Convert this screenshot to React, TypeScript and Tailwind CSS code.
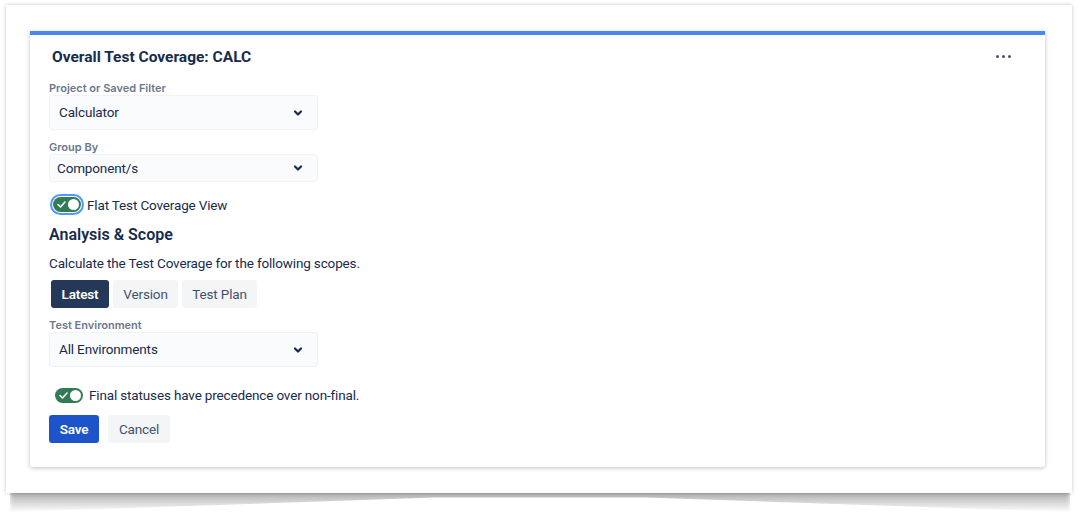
import React from "react";

const font = { fontFamily: "Roboto, 'Noto Sans', 'Liberation Sans', sans-serif" };
const labelFont = { fontFamily: "Inter, 'Noto Sans', 'Liberation Sans', sans-serif" };

function Chevron() {
	return (
		<svg width="10" height="8" viewBox="0 0 10 8" className="shrink-0">
			<polyline
				points="2,2.5 5,5.5 8,2.5"
				fill="none"
				stroke="#172B4D"
				strokeWidth="2.2"
				strokeLinecap="round"
				strokeLinejoin="round"
			/>
		</svg>
	);
}

function Select({ value, small }: { value: string; small?: boolean }) {
	return (
		<div
			className={`w-[269px] flex items-center justify-between rounded-[3px] border border-[#F1F2F4] bg-[#FAFBFC] text-[13.5px] tracking-[-0.15px] text-[#172B4D] ${
				small ? "h-[28px] pl-[7px] pr-[14px]" : "h-[35px] pl-[9px] pr-[14px]"
			}`}
		>
			<span>{value}</span>
			<Chevron />
		</div>
	);
}

function Toggle({ focused }: { focused?: boolean }) {
	const track = (
		<div className="w-[28px] h-[15px] rounded-full bg-[#357A56] flex items-center justify-between pl-[4px] pr-[2px]">
			<svg width="9" height="7" viewBox="0 0 9 7">
				<polyline
					points="1,3.5 3.5,6 8,1"
					fill="none"
					stroke="white"
					strokeWidth="1.5"
					strokeLinecap="round"
					strokeLinejoin="round"
				/>
			</svg>
			<div className="w-[11px] h-[11px] rounded-full bg-white" />
		</div>
	);
	if (!focused) return track;
	return (
		<div className="rounded-full border-2 border-[#4C9AFF] p-[1px] bg-white">{track}</div>
	);
}

function Label({ children }: { children: React.ReactNode }) {
	return (
		<div className="text-[11px] leading-[14px] font-semibold text-[#6B778C]" style={labelFont}>
			{children}
		</div>
	);
}

export default function App() {
	return (
		<div className="w-[1086px] h-[522px] bg-white relative overflow-hidden" style={font}>
			<div className="absolute left-[10px] right-[16px] top-[488px] h-[24px] bg-gradient-to-b from-[#9a9a9a] to-[rgba(200,200,200,0)] blur-[2px] [clip-path:polygon(0_0,100%_0,100%_100%,60%_40%,40%_40%,0_100%)]" />
			<div className="absolute left-[6px] top-[5px] w-[1066px] h-[488px] bg-white shadow-[0_0_4px_rgba(0,0,0,0.22)]">
				<div className="ml-[24px] mt-[26px] w-[1015px] h-[436px] bg-white border-t-4 border-[#4A88EE] rounded-b-[3px] shadow-[0_1px_4px_rgba(9,30,66,0.28)] px-[19px] pt-[12px] relative text-[13.5px] tracking-[-0.15px]">
					<div className="flex items-center justify-between">
						<h2 className="ml-[3px] text-[15.5px] tracking-normal leading-[20px] font-bold text-[#172B4D]">
							Overall Test Coverage: CALC
						</h2>
						<div className="flex gap-[3px] mr-[15px] mt-[-2px]">
							<span className="w-[3px] h-[3px] rounded-full bg-[#42526E]" />
							<span className="w-[3px] h-[3px] rounded-full bg-[#42526E]" />
							<span className="w-[3px] h-[3px] rounded-full bg-[#42526E]" />
						</div>
					</div>

					<div className="mt-[14px] tracking-normal">
						<Label>Project or Saved Filter</Label>
						<Select value="Calculator" />
					</div>

					<div className="mt-[10px] tracking-normal">
						<Label>Group By</Label>
						<Select value="Component/s" small />
					</div>

					<div className="mt-[12px] flex items-center gap-[3px] ml-[1px]">
						<Toggle focused />
						<span className="leading-[20px] text-[#172B4D]">Flat Test Coverage View</span>
					</div>

					<h3 className="mt-[10px] text-[16px] tracking-normal leading-[20px] font-semibold text-[#172B4D]">
						Analysis &amp; Scope
					</h3>
					<p className="mt-[8px] leading-[20px] text-[#172B4D]">
						Calculate the Test Coverage for the following scopes.
					</p>

					<div className="mt-[7px] ml-[2px] flex gap-[4px]">
						<button className="h-[28px] w-[58px] rounded-[3px] bg-[#253858] text-white font-semibold">
							Latest
						</button>
						<button className="h-[28px] w-[65px] rounded-[3px] bg-[#F4F5F7] text-[#42526E]">
							Version
						</button>
						<button className="h-[28px] w-[75px] rounded-[3px] bg-[#F4F5F7] text-[#42526E]">
							Test Plan
						</button>
					</div>

					<div className="mt-[10px] tracking-normal">
						<Label>Test Environment</Label>
						<Select value="All Environments" />
					</div>

					<div className="mt-[20px] ml-[6px] flex items-center gap-[6px]">
						<Toggle />
						<span className="leading-[16px] text-[#172B4D]">
							Final statuses have precedence over non-final.
						</span>
					</div>

					<div className="mt-[12px] flex gap-[9px]">
						<button className="h-[28px] w-[50px] rounded-[3px] bg-[#1D54C9] text-white font-semibold">
							Save
						</button>
						<button className="h-[28px] w-[62px] rounded-[3px] bg-[#F4F5F7] text-[#42526E]">
							Cancel
						</button>
					</div>
				</div>
			</div>
		</div>
	);
}
